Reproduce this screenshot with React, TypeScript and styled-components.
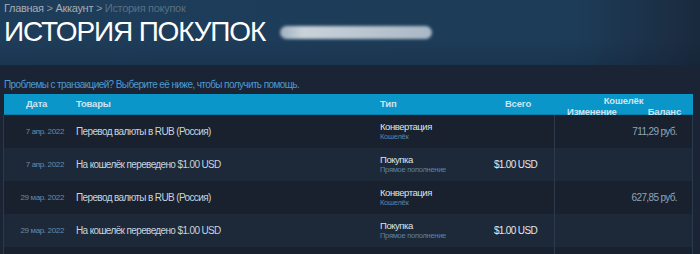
import styled, { createGlobalStyle } from 'styled-components';

const GlobalStyle = createGlobalStyle`
  html, body {
    margin: 0;
    padding: 0;
    background: #1b2434;
  }
  body {
    font-family: "Liberation Sans", Arial, sans-serif;
    overflow: hidden;
  }
`;

const Page = styled.div`
  width: 700px;
  height: 254px;
  background: #1b2434;
  overflow: hidden;
`;

const Hero = styled.div`
  height: 65px;
  padding-left: 4px;
  box-sizing: border-box;
  background:
    linear-gradient(180deg, rgba(0, 0, 0, 0) 60%, rgba(8, 20, 35, 0.18) 100%),
    linear-gradient(90deg, #1e3d5a 0%, #1d3c58 82%, #1b2e44 96%, #1a2a3d 100%);
`;

const Crumbs = styled.div`
  padding-top: 1px;
  font-size: 11px;
  line-height: 14px;
  letter-spacing: -0.3px;
  color: #8f98a0;
`;

const Crumb = styled.span<{ $current?: boolean }>`
  color: ${(p) => (p.$current ? '#5a6f82' : '#a6adb4')};
`;

const TitleRow = styled.div`
  display: flex;
  align-items: center;
`;

const Title = styled.h1`
  margin: 0;
  font-size: 28px;
  line-height: 34px;
  font-weight: normal;
  color: #ffffff;
  letter-spacing: -1.15px;
`;

const Redacted = styled.span`
  display: block;
  width: 152px;
  height: 13px;
  margin-left: 15px;
  margin-top: 1px;
  border-radius: 7px;
  background: linear-gradient(90deg, #9fb0c0 0%, #c9d2da 15%, #b8c4cf 60%, #a9b8c6 100%);
  filter: blur(1.6px);
`;

const Help = styled.div`
  margin: 13px 0 2px 4px;
  font-size: 10px;
  line-height: 14px;
  letter-spacing: -0.6px;
  color: #4b9bd0;
`;

const Table = styled.div`
  margin-left: 4px;
  width: 689px;
`;

const cols = '64px 312px 90px 84px 1fr';

const HeadRow = styled.div`
  display: grid;
  grid-template-columns: ${cols};
  height: 20px;
  background: #0b96c9;
  border-bottom: 1px solid #0a7fac;
  color: #cde4f0;
  font-size: 9.5px;
  font-weight: bold;
  letter-spacing: -0.2px;
  line-height: 12px;
`;

const HeadCell = styled.div<{ $align?: string; $pl?: number; $pr?: number }>`
  display: flex;
  align-items: center;
  justify-content: ${(p) => p.$align || 'flex-start'};
  padding-left: ${(p) => p.$pl || 0}px;
  padding-right: ${(p) => p.$pr || 0}px;
`;

const WalletHead = styled.div`
  display: grid;
  grid-template-columns: 1fr 1fr;
  grid-template-rows: 10px 10px;
`;

const WalletTitle = styled.div`
  grid-column: 1 / 3;
  text-align: center;
  line-height: 12px;
  margin-top: 1px;
`;

const WalletSub = styled.div<{ $right?: boolean }>`
  text-align: ${(p) => (p.$right ? 'right' : 'left')};
  padding-left: ${(p) => (p.$right ? 0 : 13)}px;
  padding-right: ${(p) => (p.$right ? 12 : 0)}px;
  line-height: 12px;
  margin-top: 2px;
`;

const Row = styled.div<{ $alt?: boolean }>`
  display: grid;
  grid-template-columns: ${cols};
  height: 33px;
  background: ${(p) => (p.$alt ? '#1d2939' : '#19212f')};
  border-left: 1px solid #2a3a4d;
  border-right: 1px solid #2a3a4d;
  margin-left: -1px;
`;

const DateCell = styled.div`
  display: flex;
  align-items: center;
  justify-content: flex-end;
  padding-right: 4px;
  font-size: 8px;
  letter-spacing: -0.35px;
  color: #6b8aa5;
`;

const ItemCell = styled.div`
  display: flex;
  align-items: center;
  padding-left: 8px;
  font-size: 10px;
  letter-spacing: -0.63px;
  color: #c6d4df;
`;

const TypeCell = styled.div`
  display: flex;
  flex-direction: column;
  justify-content: center;
`;

const TypeMain = styled.div`
  font-size: 9.5px;
  line-height: 11px;
  letter-spacing: -0.45px;
  color: #dfe4e8;
`;

const TypeSub = styled.div`
  font-size: 7.5px;
  line-height: 10px;
  letter-spacing: -0.27px;
  color: #5b84a6;
`;

const TotalCell = styled.div`
  display: flex;
  align-items: center;
  justify-content: flex-end;
  padding-right: 17px;
  font-size: 10px;
  letter-spacing: -0.65px;
  color: #e2e7eb;
`;

const WalletCell = styled.div`
  display: flex;
  align-items: center;
  justify-content: flex-end;
  padding-right: 15px;
  border-left: 1px solid #2b3a4d;
  font-size: 10px;
  letter-spacing: -0.64px;
  color: #8ea5b9;
`;

type Tx = {
  date: string;
  item: string;
  type: string;
  sub: string;
  total?: string;
  balance?: string;
};

const rows: Tx[] = [
  { date: '7 апр. 2022', item: 'Перевод валюты в RUB (Россия)', type: 'Конвертация', sub: 'Кошелёк', balance: '711,29 руб.' },
  { date: '7 апр. 2022', item: 'На кошелёк переведено $1.00 USD', type: 'Покупка', sub: 'Прямое пополнение', total: '$1.00 USD' },
  { date: '29 мар. 2022', item: 'Перевод валюты в RUB (Россия)', type: 'Конвертация', sub: 'Кошелёк', balance: '627,85 руб.' },
  { date: '29 мар. 2022', item: 'На кошелёк переведено $1.00 USD', type: 'Покупка', sub: 'Прямое пополнение', total: '$1.00 USD' },
  { date: '', item: '', type: '', sub: '' },
];

export default function App() {
  return (
    <Page>
      <GlobalStyle />
      <Hero>
        <Crumbs>
          <Crumb>Главная</Crumb> &gt; <Crumb>Аккаунт</Crumb> &gt; <Crumb $current>История покупок</Crumb>
        </Crumbs>
        <TitleRow>
          <Title>ИСТОРИЯ ПОКУПОК</Title>
          <Redacted />
        </TitleRow>
      </Hero>
      <Help>Проблемы с транзакцией? Выберите её ниже, чтобы получить помощь.</Help>
      <Table>
        <HeadRow>
          <HeadCell $pl={22}>Дата</HeadCell>
          <HeadCell $pl={8}>Товары</HeadCell>
          <HeadCell>Тип</HeadCell>
          <HeadCell $align="flex-end" $pr={23}>Всего</HeadCell>
          <WalletHead>
            <WalletTitle>Кошелёк</WalletTitle>
            <WalletSub>Изменение</WalletSub>
            <WalletSub $right>Баланс</WalletSub>
          </WalletHead>
        </HeadRow>
        {rows.map((r, i) => (
          <Row key={i} $alt={i % 2 === 1}>
            <DateCell>{r.date}</DateCell>
            <ItemCell>{r.item}</ItemCell>
            <TypeCell>
              <TypeMain>{r.type}</TypeMain>
              <TypeSub>{r.sub}</TypeSub>
            </TypeCell>
            <TotalCell>{r.total}</TotalCell>
            <WalletCell>{r.balance}</WalletCell>
          </Row>
        ))}
      </Table>
    </Page>
  );
}
